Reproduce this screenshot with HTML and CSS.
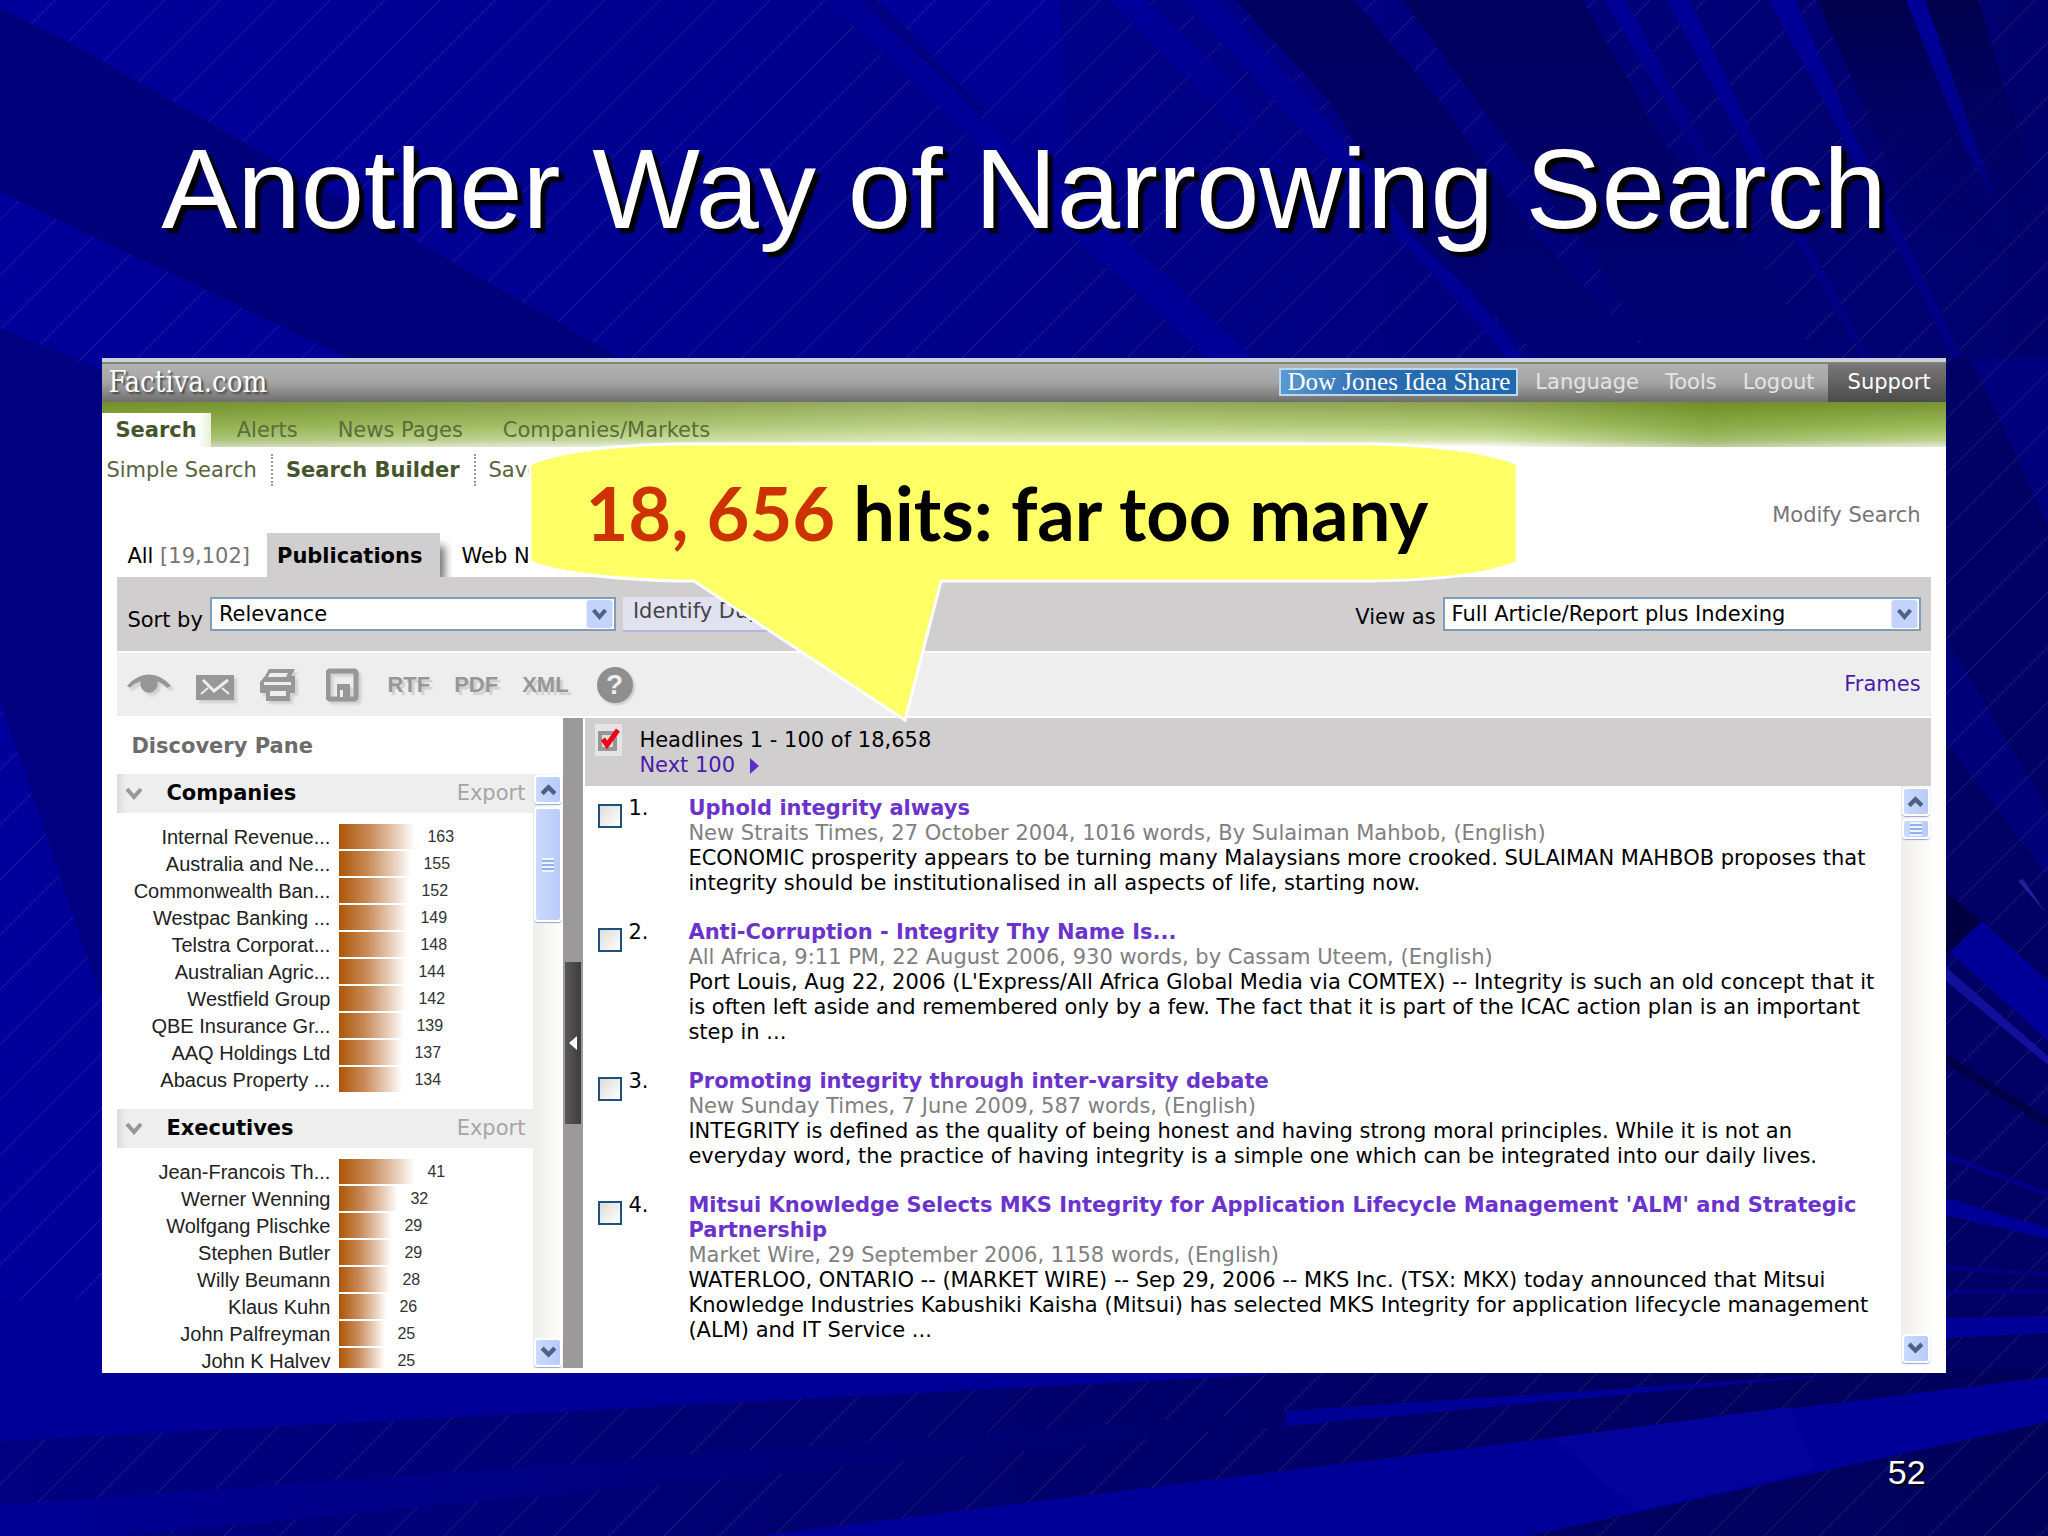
FILE: index.html
```html
<!DOCTYPE html>
<html lang="en">
<head>
    <meta charset="UTF-8">
    <meta name="viewport" content="width=device-width, initial-scale=1.0">
    <title>Another Way of Narrowing Search</title>
    <link rel="stylesheet" href="styles.css">
</head>
<body>
    <svg class="backdrop" viewBox="0 0 2048 1536" preserveAspectRatio="none" aria-hidden="true">
        <defs>
            <linearGradient id="base" x1="0" y1="0" x2="1" y2="0">
                <stop offset="0" stop-color="#00009a"/>
                <stop offset=".35" stop-color="#00008e"/>
                <stop offset=".6" stop-color="#000084"/>
                <stop offset="1" stop-color="#00006c"/>
            </linearGradient>
            <linearGradient id="fadeDown" x1="0" y1="0" x2="0" y2="1">
                <stop offset="0" stop-color="#000099"/>
                <stop offset="1" stop-color="#000080"/>
            </linearGradient>
            <linearGradient id="fadeBright" x1="0" y1="0" x2="0" y2="1">
                <stop offset="0" stop-color="#00009a"/>
                <stop offset="1" stop-color="#00009a" stop-opacity="0"/>
            </linearGradient>
            <linearGradient id="fadeDark" x1="0" y1="0" x2="0" y2="1">
                <stop offset="0" stop-color="#00005e"/>
                <stop offset="1" stop-color="#000074"/>
            </linearGradient>
            <linearGradient id="fadeDeep" x1="0" y1="0" x2="0" y2="1">
                <stop offset="0" stop-color="#00004c"/>
                <stop offset="1" stop-color="#00006c" stop-opacity="0"/>
            </linearGradient>
            <linearGradient id="fadeRight" x1="0" y1="0" x2="1" y2="0">
                <stop offset="0" stop-color="#000094"/>
                <stop offset="1" stop-color="#000068"/>
            </linearGradient>
            <linearGradient id="floor" x1="0" y1="0" x2="1" y2="0">
                <stop offset="0" stop-color="#000080"/>
                <stop offset="1" stop-color="#00005a"/>
            </linearGradient>
            <pattern id="hatch" width="55" height="55" patternUnits="userSpaceOnUse">
                <path d="M0 55L55 0" stroke="#8080e0" stroke-opacity=".22" fill="none"/>
            </pattern>
        </defs>
        <rect width="2048" height="1536" fill="url(#base)"/>
        <path d="M1946 358H2048V1536H1946z" fill="#000064"/>
        <path d="M1970 358H2048V525z" fill="#00007c"/>
        <path d="M1946 637L2048 810V877L1946 742z" fill="#000078"/>
        <path d="M0 1370H2048V1536H0z" fill="url(#floor)"/>
        <path d="M875 0H1060L1075 220L1040 200z" fill="url(#fadeBright)"/>
        <rect width="2048" height="1536" fill="url(#hatch)"/>
        <!-- upper rays -->
        <path d="M0 8L65 40L620 358H348L0 192z" fill="#00007a"/>
        <path d="M0 328L102 370V1000L0 700z" fill="#000080"/>
        <path d="M862 0H878L985 110H975z" fill="#000080"/>
        <path d="M826 0H862L980 117L1110 225L1254 358H1208L1060 225L950 117z" fill="#000096"/>
        <path d="M1109 0H1145L1220 70L1310 190H1290L1190 80z" fill="url(#fadeBright)"/>
        <path d="M1181 0H1220L1338 133L1525 358H1508L1305 133z" fill="#000092"/>
        <path d="M1236 0H1354L1449 113L1534 233L1651 358H1540L1410 233L1331 103z" fill="url(#fadeDark)"/>
        <path d="M1403 0H1582L1664 143L1775 283L1815 358H1651L1612 283L1507 143z" fill="url(#fadeDark)"/>
        <path d="M1605 0H1625L1716 167L1703 167z" fill="url(#fadeDown)"/>
        <path d="M1667 0H1690L1768 167L1870 358H1862L1755 167z" fill="url(#fadeDown)"/>
        <path d="M1769 0H1795L1860 147L1963 358H1952L1848 147z" fill="url(#fadeDown)"/>
        <path d="M1818 0H1906L1966 150L2020 290H1940L1880 145z" fill="url(#fadeDeep)"/>
        <path d="M1925 0H1978L2023 150L2048 240V290L1978 150z" fill="url(#fadeDeep)"/>
        <path d="M1906 0H1925L1978 150L1995 200L1966 150z" fill="url(#fadeDown)"/>
        <!-- right hand rays -->
        <path d="M1946 892L1982 921L1950 952H1946z" fill="#000040"/>
        <path d="M1950 952L1982 921L2048 981V1041z" fill="#000099"/>
        <path d="M1946 967L2048 1056V1065L1946 981z" fill="#10109a"/>
        <path d="M2018 881L2023 879L2046 913z" fill="#20209a"/>
        <path d="M1946 1054L2048 1118V1128L1946 1064z" fill="#000048"/>
        <path d="M1946 1153L2048 1192V1196L1946 1159z" fill="#00008a"/>
        <path d="M1946 1198L2048 1228V1239L1946 1215z" fill="#000099"/>
        <path d="M1946 1265L2048 1273V1276L1946 1270zM1946 1290H2048V1294H1946z" fill="#000080"/>
        <path d="M1946 1318L2048 1316V1333L1946 1338z" fill="#000099"/>
        <!-- lower rays -->
        <path d="M0 1300H102V1358H1300V1373L0 1441z" fill="#000098"/>
        <path d="M0 1505L1286 1411V1426L118 1536H0z" fill="url(#fadeRight)"/>
        <path d="M1286 1411L1855 1373L1286 1426z" fill="#000096"/>
        <path d="M757 1536L2048 1377V1422L1528 1536z" fill="#000099"/>
        <path d="M1552 1438L1790 1407L1815 1469L1637 1511z" fill="#04049c"/>
    </svg>

    <main class="slide">
        <h1>Another Way of Narrowing Search</h1>

        <div class="screen">
            <header class="topbar">
                <span class="brand">Factiva.com</span>
                <a class="idea-share" href="#">Dow Jones Idea Share</a>
                <a class="util" href="#">Language</a>
                <a class="util" href="#">Tools</a>
                <a class="util" href="#">Logout</a>
                <a class="support" href="#">Support</a>
            </header>

            <nav class="mainnav">
                <a class="current" href="#">Search</a>
                <a href="#">Alerts</a>
                <a href="#">News Pages</a>
                <a href="#">Companies/Markets</a>
            </nav>

            <nav class="subnav">
                <a href="#">Simple Search</a>
                <a class="current" href="#">Search Builder</a>
                <a href="#">Saved</a>
            </nav>

            <div class="modify"><a href="#">Modify Search</a></div>

            <div class="content">
                <div class="tabs">
                    <a href="#">All <span>[19,102]</span></a>
                    <a class="current" href="#">Publications</a>
                    <a href="#">Web News</a>
                </div>

                <div class="sortbar">
                    <label for="sort">Sort by</label>
                    <div class="dropdown sort">
                        <select id="sort"><option>Relevance</option></select>
                        <svg viewBox="0 0 26 28"><rect width="26" height="28" rx="3" fill="#c3d3fb"/><path d="M7 10L13 17L19 10" fill="none" stroke="#4d6185" stroke-width="4"/></svg>
                    </div>
                    <button class="identify">Identify Duplicates</button>
                    <label class="viewlabel" for="view">View as</label>
                    <div class="dropdown view">
                        <select id="view"><option>Full Article/Report plus Indexing</option></select>
                        <svg viewBox="0 0 26 28"><rect width="26" height="28" rx="3" fill="#c3d3fb"/><path d="M7 10L13 17L19 10" fill="none" stroke="#4d6185" stroke-width="4"/></svg>
                    </div>
                </div>

                <div class="toolbar">
                    <button aria-label="View"><svg width="44" height="32" viewBox="0 0 46 32"><path d="M0 17Q10 5 23 5T46 17L42 19Q37 14 32 12Q33 23 23 24Q13 23 14 12Q8 14 3 19z" fill="#979797"/></svg></button>
                    <button aria-label="E-mail"><svg width="41" height="32" viewBox="0 0 41 32"><path d="M1 6H39V31H1z" fill="#979797"/><path d="M8 11L19 22L33 11" fill="none" stroke="#efeeef" stroke-width="3"/><path d="M6 25L13 19M34 25L27 19" fill="none" stroke="#efeeef" stroke-width="2"/></svg></button>
                    <button aria-label="Print"><svg width="42" height="34" viewBox="0 0 42 34"><path d="M9 1H35L31 8H35V25H30V33H6V25H0V14L5 8z" fill="#979797"/><path d="M10 5H28L26 9H8zM4 14H31V17H4zM10 23H26V28H10z" fill="#efeeef"/></svg></button>
                    <button aria-label="Save"><svg width="37" height="34" viewBox="0 0 37 34"><rect x="2" y="3" width="28" height="28" rx="2" fill="none" stroke="#979797" stroke-width="5"/><path d="M11 16H24V31H11z" fill="#979797"/><path d="M14 22H17V29H14z" fill="#efeeef"/></svg></button>
                    <button class="fmt">RTF</button>
                    <button class="fmt">PDF</button>
                    <button class="fmt">XML</button>
                    <button class="help" aria-label="Help">?</button>
                    <a href="#">Frames</a>
                </div>

                <div class="workspace">
                    <aside class="discovery">
                        <h2>Discovery Pane</h2>
                        <div class="scroller">
                            <div class="charts">
                                <section>
                                    <div class="chart-head">
                                        <svg width="18" height="14" viewBox="0 0 18 14"><path d="M2 2L9 10L16 2" fill="none" stroke="#979797" stroke-width="4"/></svg>
                                        <h3>Companies</h3>
                                        <a href="#">Export</a>
                                    </div>
                                    <ul>
                                        <li><span>Internal Revenue...</span><i style="width:76px"></i><b>163</b></li>
                                        <li><span>Australia and Ne...</span><i style="width:72px"></i><b>155</b></li>
                                        <li><span>Commonwealth Ban...</span><i style="width:70px"></i><b>152</b></li>
                                        <li><span>Westpac Banking ...</span><i style="width:69px"></i><b>149</b></li>
                                        <li><span>Telstra Corporat...</span><i style="width:69px"></i><b>148</b></li>
                                        <li><span>Australian Agric...</span><i style="width:67px"></i><b>144</b></li>
                                        <li><span>Westfield Group</span><i style="width:67px"></i><b>142</b></li>
                                        <li><span>QBE Insurance Gr...</span><i style="width:65px"></i><b>139</b></li>
                                        <li><span>AAQ Holdings Ltd</span><i style="width:63px"></i><b>137</b></li>
                                        <li><span>Abacus Property ...</span><i style="width:63px"></i><b>134</b></li>
                                    </ul>
                                </section>
                                <section>
                                    <div class="chart-head">
                                        <svg width="18" height="14" viewBox="0 0 18 14"><path d="M2 2L9 10L16 2" fill="none" stroke="#979797" stroke-width="4"/></svg>
                                        <h3>Executives</h3>
                                        <a href="#">Export</a>
                                    </div>
                                    <ul>
                                        <li><span>Jean-Francois Th...</span><i style="width:76px"></i><b>41</b></li>
                                        <li><span>Werner Wenning</span><i style="width:59px"></i><b>32</b></li>
                                        <li><span>Wolfgang Plischke</span><i style="width:53px"></i><b>29</b></li>
                                        <li><span>Stephen Butler</span><i style="width:53px"></i><b>29</b></li>
                                        <li><span>Willy Beumann</span><i style="width:51px"></i><b>28</b></li>
                                        <li><span>Klaus Kuhn</span><i style="width:48px"></i><b>26</b></li>
                                        <li><span>John Palfreyman</span><i style="width:46px"></i><b>25</b></li>
                                        <li><span>John K Halvey</span><i style="width:46px"></i><b>25</b></li>
                                    </ul>
                                </section>
                            </div>
                            <div class="scrollbar">
                                <button aria-label="Scroll up"><svg viewBox="0 0 16 12"><path d="M2 10L8 4L14 10" fill="none" stroke="#4d6185" stroke-width="4"/></svg></button>
                                <div class="thumb long"></div>
                                <button class="down" aria-label="Scroll down"><svg viewBox="0 0 16 12"><path d="M2 2L8 8L14 2" fill="none" stroke="#4d6185" stroke-width="4"/></svg></button>
                            </div>
                        </div>
                    </aside>

                    <div class="splitter"><button aria-label="Collapse pane"><svg width="8" height="14" viewBox="0 0 8 14"><path d="M8 0V14L0 7z" fill="#fff"/></svg></button></div>

                    <section class="results">
                        <div class="results-head">
                            <svg width="27" height="32" viewBox="0 0 27 32"><path d="M0 0H27V32H0z" fill="#e6e5e6"/><path d="M5 9H20V25H5z" fill="#ddd" stroke="#979797" stroke-width="4"/><path d="M8 15L12 21L23 6" fill="none" stroke="#f00014" stroke-width="5"/></svg>
                            <div>
                                <p>Headlines 1 - 100 of 18,658</p>
                                <a href="#">Next 100 <svg width="9" height="16" viewBox="0 0 9 16"><path d="M0 0L9 8L0 16z" fill="#5a2cc8"/></svg></a>
                            </div>
                        </div>
                        <div class="scroller">
                            <ol>
                                <li>
                                    <input type="checkbox" id="r1"><label for="r1">1.</label>
                                    <article>
                                        <a href="#">Uphold integrity always</a>
                                        <p class="source">New Straits Times, 27 October 2004, 1016 words, By Sulaiman Mahbob, (English)</p>
                                        <p>ECONOMIC prosperity appears to be turning many Malaysians more crooked. SULAIMAN MAHBOB proposes that<br>integrity should be institutionalised in all aspects of life, starting now.</p>
                                    </article>
                                </li>
                                <li>
                                    <input type="checkbox" id="r2"><label for="r2">2.</label>
                                    <article>
                                        <a href="#">Anti-Corruption - Integrity Thy Name Is...</a>
                                        <p class="source">All Africa, 9:11 PM, 22 August 2006, 930 words, by Cassam Uteem, (English)</p>
                                        <p>Port Louis, Aug 22, 2006 (L'Express/All Africa Global Media via COMTEX) -- Integrity is such an old concept that it<br>is often left aside and remembered only by a few. The fact that it is part of the ICAC action plan is an important<br>step in ...</p>
                                    </article>
                                </li>
                                <li>
                                    <input type="checkbox" id="r3"><label for="r3">3.</label>
                                    <article>
                                        <a href="#">Promoting integrity through inter-varsity debate</a>
                                        <p class="source">New Sunday Times, 7 June 2009, 587 words, (English)</p>
                                        <p>INTEGRITY is defined as the quality of being honest and having strong moral principles. While it is not an<br>everyday word, the practice of having integrity is a simple one which can be integrated into our daily lives.</p>
                                    </article>
                                </li>
                                <li>
                                    <input type="checkbox" id="r4"><label for="r4">4.</label>
                                    <article>
                                        <a href="#">Mitsui Knowledge Selects MKS Integrity for Application Lifecycle Management 'ALM' and Strategic<br>Partnership</a>
                                        <p class="source">Market Wire, 29 September 2006, 1158 words, (English)</p>
                                        <p>WATERLOO, ONTARIO -- (MARKET WIRE) -- Sep 29, 2006 -- MKS Inc. (TSX: MKX) today announced that Mitsui<br>Knowledge Industries Kabushiki Kaisha (Mitsui) has selected MKS Integrity for application lifecycle management<br>(ALM) and IT Service ...</p>
                                    </article>
                                </li>
                            </ol>
                            <div class="scrollbar">
                                <button aria-label="Scroll up"><svg viewBox="0 0 16 12"><path d="M2 10L8 4L14 10" fill="none" stroke="#4d6185" stroke-width="4"/></svg></button>
                                <div class="thumb"></div>
                                <button class="down" aria-label="Scroll down"><svg viewBox="0 0 16 12"><path d="M2 2L8 8L14 2" fill="none" stroke="#4d6185" stroke-width="4"/></svg></button>
                            </div>
                        </div>
                    </section>
                </div>
            </div>

            <div class="callout">
                <svg width="992" height="282" viewBox="-2 -2 992 282"><path d="M0 20Q40 2 150 0H837Q947 2 987 20V118Q947 136 837 137H411L375 276L164 137H150Q40 134 0 118z" fill="#ffff66" stroke="#fff" stroke-width="3"/></svg>
                <p><span>18, 656</span> hits: far too many</p>
            </div>
        </div>

        <footer>52</footer>
    </main>
</body>
</html>
```
FILE: styles.css
```css
* {
    box-sizing: border-box;
}
body {
    margin: 0;
    background: #00008c;
    font-family: "DejaVu Sans", Verdana, sans-serif;
    font-size: 21px;
    line-height: 25px;
    color: #000;
}
h1, h2, h3, p, ul, ol {
    margin: 0;
    padding: 0;
    font-size: inherit;
}
ul, ol {
    list-style: none;
}
a {
    color: inherit;
    text-decoration: none;
}
button, select {
    font: inherit;
    color: inherit;
    border: 0;
    padding: 0;
    background: none;
}
svg {
    display: block;
}
.backdrop {
    position: absolute;
    top: 0;
    left: 0;
    width: 100%;
    height: 100%;
}
.slide {
    position: relative;
    min-height: 100vh;
    padding: 124px 5vw 0;
}
h1 {
    margin-bottom: 104px;
    font: 114px/130px "Liberation Sans", Arial, sans-serif;
    color: #fff;
    text-align: center;
    text-shadow: 5px 5px 2px #000;
    white-space: nowrap;
}
.screen {
    position: relative;
    height: 1015px;
    background: #fff;
}

/* header */
.topbar {
    display: flex;
    align-items: center;
    height: 44px;
    padding-left: 6px;
    border-top: 4px solid #c9d0dc;
    background: linear-gradient(#7c8a70 2px, #b2b1b2 2px, #a5a5a5 50%, #6e6e6e);
    color: #e4e4e4;
}
.brand {
    margin-right: auto;
    font: 29px/36px "DejaVu Serif Condensed", "DejaVu Serif", serif;
    color: #fff;
    text-shadow: 2px 2px 2px #444;
}
.idea-share {
    padding: 0 6px;
    border: 2px solid #b9d8f0;
    background: linear-gradient(100deg, #5a9bd2, #2a6cb0 40%, #1f68ae);
    font: 25px/24px "Liberation Serif", serif;
    color: #fff;
}
.util {
    margin-left: 26px;
}
.idea-share + .util {
    margin-left: 17px;
}
.support {
    margin-left: 13px;
    padding: 0 15px 0 20px;
    background: linear-gradient(#7a7879, #4c4b4c);
    line-height: 39px;
    color: #fff;
}
.mainnav {
    display: flex;
    align-items: flex-end;
    height: 45px;
    background:
        linear-gradient(90deg, rgba(90,130,20,.35), rgba(255,255,255,.22) 45%, rgba(255,255,255,.1) 75%, rgba(90,130,20,.4) 87%, rgba(90,130,20,.15)),
        linear-gradient(#7d9636, #a9c566 55%, #cfe2a4 85%, #fff);
    color: #5a6d38;
    line-height: 34px;
}
.mainnav a {
    margin-left: 40px;
}
.mainnav .current {
    margin-left: 0;
    margin-right: -14px;
    padding: 0 14px 0 13px;
    background: linear-gradient(90deg, #fff 88%, #e8f0d8);
    font-weight: bold;
    color: #46542c;
}
.subnav {
    display: flex;
    height: 56px;
    padding: 7px 4px;
    color: #57643e;
}
.subnav a {
    height: 32px;
    line-height: 32px;
    padding-right: 14px;
    margin-right: 13px;
    border-right: 2px dotted #999;
}
.subnav a:last-child {
    border: 0;
}
.subnav .current {
    font-weight: bold;
    color: #46542c;
}
.modify {
    height: 30px;
    padding-right: 25px;
    text-align: right;
    color: #757575;
}
.content {
    margin: 0 15px;
}

/* tabs and sort bar */
.tabs {
    display: flex;
    height: 44px;
    line-height: 46px;
    padding-left: 10px;
}
.tabs span {
    color: #757575;
}
.tabs .current {
    margin: 0 22px 0 17px;
    padding: 0 17px 0 10px;
    background: #d0cecf;
    box-shadow: 9px 9px 8px -4px #777;
    clip-path: inset(0 -14px 0 0);
    font-weight: bold;
}
.sortbar {
    display: flex;
    align-items: center;
    height: 74px;
    padding: 0 10px;
    background: #d0cecf;
}
.sortbar label {
    padding-top: 12px;
    margin-right: 7px;
}
.dropdown {
    position: relative;
    width: 406px;
}
.dropdown select {
    display: block;
    width: 100%;
    height: 34px;
    padding-left: 7px;
    border: 2px solid #7f9db9;
    background: #fff;
    appearance: none;
}
.dropdown svg {
    position: absolute;
    top: 3px;
    right: 3px;
    width: 27px;
    height: 28px;
}
.dropdown.view {
    width: 478px;
}
.identify {
    height: 35px;
    margin-left: 7px;
    padding: 0 10px 3px;
    border-bottom: 2px solid #b5b8d8;
    background: #e0e2ef;
    color: #444;
}
.sortbar .viewlabel {
    margin-left: auto;
    padding-top: 6px;
}

/* icon row */
.toolbar {
    display: flex;
    align-items: center;
    gap: 24px;
    height: 63px;
    margin: 2px 0;
    padding: 0 10px;
    background: #efeeef;
}
.toolbar svg {
    filter: drop-shadow(3px 3px 1px #d0d0d0);
}
.toolbar a {
    margin-left: auto;
    color: #4a1ba8;
}
.fmt {
    font: bold 22px/30px "Liberation Sans", Arial, sans-serif;
    color: #979797;
    text-shadow: 3px 3px 1px #d0d0d0;
}
.toolbar .help {
    width: 36px;
    height: 36px;
    margin-left: 4px;
    border-radius: 50%;
    background: #8f8f8f;
    box-shadow: 2px 2px 2px #ccc;
    font: bold 28px/36px "Liberation Sans", Arial, sans-serif;
    color: #efeeef;
}

/* panes */
.workspace {
    display: flex;
    height: 650px;
}
.discovery {
    display: flex;
    flex-direction: column;
    width: 446px;
}
.discovery h2 {
    padding: 16px 14px 15px;
    color: #6c6c6c;
}
.scroller {
    display: flex;
    flex: 1;
    min-height: 0;
}
.charts {
    flex: 1;
    overflow: hidden;
}
.chart-head {
    display: flex;
    align-items: center;
    height: 39px;
    padding: 0 8px;
    background: linear-gradient(90deg, #dcdcdc, #efeeef 10px);
}
.chart-head h3 {
    margin-left: 23px;
}
.chart-head a {
    margin-left: auto;
    color: #a5a5a5;
}
.charts ul {
    padding: 11px 0 15px;
    font-family: "Liberation Sans", Arial, sans-serif;
}
.charts li {
    display: flex;
    height: 27px;
    line-height: 26px;
}
.charts span {
    width: 222px;
    padding-right: 9px;
    text-align: right;
    font-size: 20px;
    white-space: nowrap;
    color: #222;
}
.charts i {
    height: 25px;
    background: linear-gradient(90deg, #ad5606, #c88a58 40%, #e8cdb8 75%, #fff);
}
.charts b {
    margin-left: 12px;
    font-size: 16px;
    font-weight: normal;
    color: #333;
}
.scrollbar {
    display: flex;
    flex-direction: column;
    gap: 3px;
    width: 30px;
    padding: 1px;
    background: linear-gradient(90deg, #efeeea, #fdfdfb);
}
.scrollbar button, .thumb {
    height: 29px;
    border: 2px solid #fff;
    border-radius: 4px;
    background: linear-gradient(90deg, #cbdafd, #b8cbf8);
    box-shadow: 0 1px 1px #8fa8d8;
}
.scrollbar svg {
    width: 17px;
    margin: 0 auto;
}
.scrollbar .down {
    margin-top: auto;
}
.thumb {
    display: flex;
    align-items: center;
    justify-content: center;
    height: 20px;
}
.thumb.long {
    height: 115px;
}
.thumb::before {
    content: "";
    width: 12px;
    height: 14px;
    background: repeating-linear-gradient(#eef4fe 0 2px, #8cb0f8 2px 4px);
}
.splitter {
    display: flex;
    align-items: center;
    width: 20px;
    background: #9b999a;
}
.splitter button {
    display: flex;
    align-items: center;
    width: 16px;
    height: 162px;
    margin-left: 2px;
    padding-left: 4px;
    background: linear-gradient(90deg, #5a5859, #3e3c3d);
}
.results {
    display: flex;
    flex: 1;
    flex-direction: column;
    margin-left: 2px;
    padding-bottom: 4px;
}
.results-head {
    display: flex;
    gap: 17px;
    height: 68px;
    padding: 6px 10px;
    background: #d0cecf;
}
.results-head div {
    padding-top: 4px;
}
.results-head a {
    display: flex;
    align-items: center;
    gap: 15px;
    color: #4a1ba8;
}
.results ol {
    flex: 1;
    padding: 10px 0 0 13px;
    white-space: nowrap;
}
.results li {
    display: flex;
    margin-bottom: 24px;
}
.results input {
    appearance: none;
    width: 24px;
    height: 24px;
    margin: 8px 6px 0 0;
    border: 2px solid #1c5180;
    background: linear-gradient(135deg, #dcdcd7, #fff);
}
.results label {
    width: 60px;
}
.results article a {
    display: block;
    font-weight: bold;
    color: #6a33cc;
}
.source {
    color: #808080;
}

/* speech bubble over the page */
.callout {
    position: absolute;
    top: 84px;
    left: 426px;
}
.callout p {
    position: absolute;
    top: 26px;
    left: 57px;
    font: bold 74px/90px Lato, Calibri, sans-serif;
    white-space: nowrap;
}
.callout span {
    color: #cc3300;
}
footer {
    padding: 79px 20px 0;
    font: 34px/40px "Liberation Sans", Arial, sans-serif;
    color: #fff;
    text-align: right;
    text-shadow: 2px 2px 1px #000;
}
```
